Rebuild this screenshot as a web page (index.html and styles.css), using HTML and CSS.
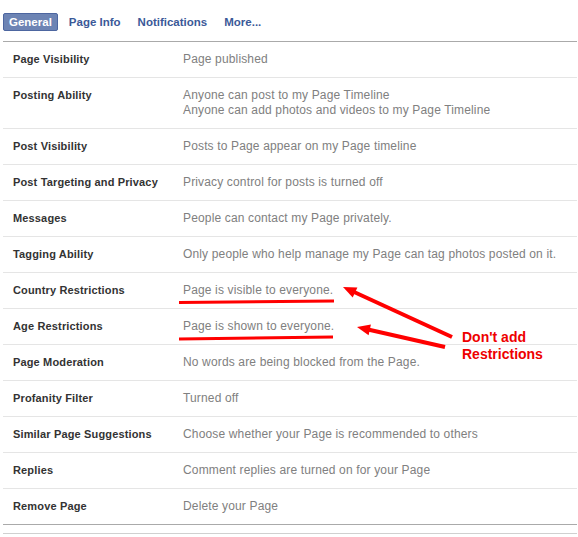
FILE: index.html
```html
<!DOCTYPE html>
<html lang="en">
<head>
  <meta charset="UTF-8" />
  <title>Page Settings</title>
  <link rel="stylesheet" href="styles.css">
</head>
<body>
  <div class="page">
    <div class="tabs">
      <span class="tab active">General</span>
      <span class="tab">Page Info</span>
      <span class="tab">Notifications</span>
      <span class="tab">More...</span>
    </div>

    <div class="settings">
      <div class="row">
        <div class="label">Page Visibility</div>
        <div class="value">Page published</div>
      </div>
      <div class="row">
        <div class="label">Posting Ability</div>
        <div class="value">Anyone can post to my Page Timeline<br>Anyone can add photos and videos to my Page Timeline</div>
      </div>
      <div class="row">
        <div class="label">Post Visibility</div>
        <div class="value">Posts to Page appear on my Page timeline</div>
      </div>
      <div class="row">
        <div class="label">Post Targeting and Privacy</div>
        <div class="value">Privacy control for posts is turned off</div>
      </div>
      <div class="row">
        <div class="label">Messages</div>
        <div class="value">People can contact my Page privately.</div>
      </div>
      <div class="row">
        <div class="label">Tagging Ability</div>
        <div class="value">Only people who help manage my Page can tag photos posted on it.</div>
      </div>
      <div class="row">
        <div class="label">Country Restrictions</div>
        <div class="value">Page is visible to everyone.</div>
      </div>
      <div class="row">
        <div class="label">Age Restrictions</div>
        <div class="value">Page is shown to everyone.</div>
      </div>
      <div class="row">
        <div class="label">Page Moderation</div>
        <div class="value">No words are being blocked from the Page.</div>
      </div>
      <div class="row">
        <div class="label">Profanity Filter</div>
        <div class="value">Turned off</div>
      </div>
      <div class="row">
        <div class="label">Similar Page Suggestions</div>
        <div class="value">Choose whether your Page is recommended to others</div>
      </div>
      <div class="row">
        <div class="label">Replies</div>
        <div class="value">Comment replies are turned on for your Page</div>
      </div>
      <div class="row">
        <div class="label">Remove Page</div>
        <div class="value">Delete your Page</div>
      </div>
    </div>
    <div class="footer-line"></div>
  </div>

  <!-- red annotation drawn over the screenshot -->
  <svg class="marks" width="578" height="537" viewBox="0 0 578 537">
    <path d="M179 302.5 L334 301" stroke="#f00" stroke-width="3" fill="none" />
    <path d="M179 339 L333 337" stroke="#f00" stroke-width="3" fill="none" />
    <line x1="452" y1="337" x2="353" y2="291.5" stroke="#f00" stroke-width="4" />
    <polygon points="343,287 352.7,297.5 357.4,287.5" fill="#f00" />
    <line x1="445" y1="347" x2="368" y2="329.5" stroke="#f00" stroke-width="4" />
    <polygon points="357,327 368.6,335.3 370.9,324.5" fill="#f00" />
  </svg>
  <div class="note">Don't add<br>Restrictions</div>
</body>
</html>
```

FILE: styles.css
```css
body, html {
  margin: 0;
  background: #fff;
  font-family: "Liberation Sans", Arial, sans-serif;
}
.page {
  width: 574px;
  padding: 0 1px 0 3px;
}
.tabs {
  display: flex;
  align-items: center;
  gap: 5px;
  height: 41px;
  padding-top: 2px;
  box-sizing: border-box;
}
.tab {
  font-size: 11.5px;
  font-weight: bold;
  line-height: 16px;
  color: #3b5998;
  padding: 0 5px;
  border: 1px solid transparent;
}
.tab.active {
  color: #fff;
  background-color: #6d84b4;
  border-color: #4d66a0;
  border-radius: 2px;
}
.settings {
  border-top: 1px solid #aaa;
  border-bottom: 1px solid #aaa;
}
.row {
  display: grid;
  grid-template-columns: 170px 1fr;
  padding: 10px 0 10px 10px;
  line-height: 15px;
  border-bottom: 1px solid #e5e5e5;
}
.row:last-child {
  border-bottom: none;
}
.label {
  font-size: 11px;
  font-weight: bold;
  letter-spacing: 0.15px;
  color: #333;
}
.value {
  font-size: 12px;
  letter-spacing: 0.15px;
  color: #808080;
}
.footer-line {
  margin-top: 8px;
  border-top: 1px solid #d0d0d0;
}
.marks {
  position: absolute;
  top: 0;
  left: 0;
  pointer-events: none;
}
.note {
  position: absolute;
  left: 462px;
  top: 329px;
  font-size: 14px;
  font-weight: bold;
  line-height: 17px;
  color: #ee0000;
}
```
